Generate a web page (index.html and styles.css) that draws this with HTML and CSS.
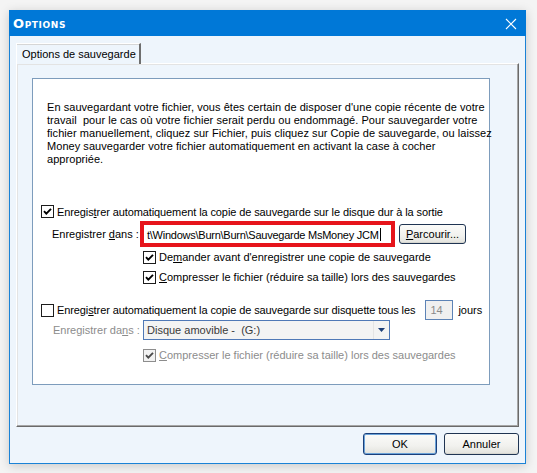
FILE: index.html
```html
<!DOCTYPE html>
<html lang="fr">
<head>
<meta charset="utf-8">
<title>Options</title>
<link rel="stylesheet" href="styles.css">
</head>
<body>
<div class="window">
  <div class="titlebar">
    <span class="title">Options</span>
    <svg class="close" width="12" height="12" viewBox="0 0 12 12"><path d="M1 1 L11 11 M11 1 L1 11" stroke="#fff" stroke-width="1.1" fill="none"/></svg>
  </div>
  <div class="client">
    <div class="tabs"><div class="tab">Options de sauvegarde</div></div>
    <div class="panel">
      <div class="box">
        <p class="intro">En sauvegardant votre fichier, vous êtes certain de disposer d'une copie récente de votre<br>travail &nbsp;pour le cas où votre fichier serait perdu ou endommagé. Pour sauvegarder votre<br>fichier manuellement, cliquez sur Fichier, puis cliquez sur Copie de sauvegarde, ou laissez<br>Money sauvegarder votre fichier automatiquement en activant la case à cocher<br>appropriée.</p>

        <div class="row r1">
          <span class="cb"><svg viewBox="0 0 13 13"><path d="M3 6.2 L5.3 8.6 L10 3.8" /></svg></span>
          <span class="lbl tight">Enregis<u>t</u>rer automatiquement la copie de sauvegarde sur le disque dur à la sortie</span>
        </div>
        <div class="row r2">
          <span class="dlabel">Enregistrer <u>d</u>ans :</span>
          <div class="redfield"><div class="field"><span class="ftext">t\Windows\Burn\Burn\Sauvegarde MsMoney JCM</span><span class="caret"></span></div></div>
          <button class="btn browse"><u>P</u>arcourir...</button>
        </div>
        <div class="row sub">
          <span class="cb"><svg viewBox="0 0 13 13"><path d="M3 6.2 L5.3 8.6 L10 3.8" /></svg></span>
          <span class="lbl">De<u>m</u>ander avant d'enregistrer une copie de sauvegarde</span>
        </div>
        <div class="row sub">
          <span class="cb"><svg viewBox="0 0 13 13"><path d="M3 6.2 L5.3 8.6 L10 3.8" /></svg></span>
          <span class="lbl"><u>C</u>ompresser le fichier (réduire sa taille) lors des sauvegardes</span>
        </div>

        <div class="row r5">
          <span class="cb"></span>
          <span class="lbl tight">Enregi<u>s</u>trer automatiquement la copie de sauvegarde sur disquette tous les</span>
          <span class="days">14</span>
          <span class="jours">jours</span>
        </div>
        <div class="row r6">
          <span class="dlabel dis">Enregistrer da<u>n</u>s :</span>
          <div class="combo"><span class="ctext">Disque amovible - &nbsp;(G:)</span><span class="arrow"><svg width="9" height="5" viewBox="0 0 9 5"><path d="M1 0 H8 L4.5 4 Z" fill="#1d3f78"/></svg></span></div>
        </div>
        <div class="row sub dis">
          <span class="cb dcb"><svg viewBox="0 0 13 13"><path d="M3 6.2 L5.3 8.6 L10 3.8" /></svg></span>
          <span class="lbl"><u>C</u>ompresser le fichier (réduire sa taille) lors des sauvegardes</span>
        </div>
      </div>
    </div>
    <div class="buttons">
      <button class="btn default">OK</button>
      <button class="btn">Annuler</button>
    </div>
  </div>
</div>
</body>
</html>
```

FILE: styles.css
```css
* { box-sizing: border-box; }
html, body { margin: 0; padding: 0; }
body {
  width: 537px;
  height: 473px;
  background: #f4f4f4;
  font-family: "Liberation Sans", Arial, sans-serif;
  font-size: 11px;
  color: #000;
  overflow: hidden;
}
.window {
  margin: 10px 0 0 9px;
  width: 517px;
  height: 454px;
  border: 1px solid #1a82d6;
  background: #eef5fc;
  box-shadow: 0 2px 10px rgba(0,0,0,0.18);
  display: flex;
  flex-direction: column;
}
.titlebar {
  background: #0078d7;
  display: flex;
  align-items: center;
  justify-content: space-between;
  margin: -1px -1px 0 -1px;
  height: 26px;
  padding: 1px 9px 0 4px;
}
.title {
  color: #fff;
  font-family: "DejaVu Sans", sans-serif;
  font-weight: bold;
  font-size: 13px;
  font-variant: small-caps;
  letter-spacing: 0.6px;
}
.close { display: block; }
.client {
  flex: 1;
  padding: 7px 6px 8px 6px;
  display: flex;
  flex-direction: column;
}
.tabs { display: flex; height: 21px; position: relative; z-index: 1; margin-bottom: -1px; }
.tab {
  width: 125px;
  height: 21px;
  background: #eef5fc;
  border-top: 1px solid #fff;
  border-left: 1px solid #fff;
  border-right: 2px solid #6e6e6e;
  padding: 4px 0 0 5px;
  white-space: nowrap;
  box-shadow: inset 0 1px 0 #d6d6d6;
}
.panel {
  height: 364px;
  border: 1px solid;
  border-color: #fff #6a6a6a #6a6a6a #fff;
  box-shadow: inset -1px -1px 0 #a6a6a6, inset 1px 1px 0 #e3e3e3;
  padding: 14px 0 0 15px;
}
.box {
  width: 458px;
  height: 307px;
  background: #fff;
  border: 1px solid #7d9cbc;
  padding: 22px 0 0 8px;
}
.intro {
  margin: 0 0 0 6px;
  line-height: 13px;
  white-space: nowrap;
  letter-spacing: 0.05px;
}
.row {
  display: flex;
  align-items: center;
  white-space: nowrap;
}
.r1 { margin-top: 36px; height: 19px; }
.r2 { height: 26px; }
.sub { height: 20px; padding-left: 102px; }
.r5 { margin-top: 13px; height: 20px; }
.r6 { height: 20px; }
.row.sub.dis { margin-top: 5px; }
.cb {
  width: 13px;
  height: 13px;
  border: 1px solid #1c1c1c;
  background: #fff;
  flex: none;
  margin-right: 2px;
  position: relative;
}
.cb svg { position: absolute; left: -1px; top: -1px; width: 13px; height: 13px; }
.cb path { fill: none; stroke: #000; stroke-width: 1.9; }
.dcb { border-color: #8d8d8d; background: #f2f2f2; }
.dcb path { stroke: #4a4a4a; }
.lbl { padding-left: 1px; }
.tight { letter-spacing: -0.1px; }
.dlabel { margin-left: 11px; width: 88px; flex: none; }
.r6 .dlabel { margin-left: 12px; width: 90px; }
.dis, .dis .lbl, .dlabel.dis { color: #8c8c8c; }
.redfield {
  width: 255px;
  height: 26px;
  border: 4px solid #e6141b;
  background: #fff;
  flex: none;
  padding: 1px 0 0 3px;
}
.field {
  height: 100%;
  display: flex;
  align-items: center;
  background: #fff;
  letter-spacing: -0.25px;
}
.ftext { flex: none; }
.caret { flex: none; width: 1px; height: 13px; background: #000; margin-left: 1px; }
.btn {
  font-family: inherit;
  font-size: 11px;
  color: #000;
  height: 22px;
  width: 75px;
  border: 1px solid #1f3452;
  border-radius: 3px;
  background: linear-gradient(#fbfbf9, #f1f1ee 60%, #e2e2dc);
  padding: 0;
  box-shadow: inset 0 -1px 0 #d6d6d0;
}
.browse { width: 67px; height: 20px; margin-left: 4px; }
.days {
  width: 28px;
  height: 20px;
  border: 1px solid #5d83b6;
  background: #f0f0f0;
  color: #8a8a8a;
  padding: 3px 0 0 4px;
  margin-left: 10px;
  flex: none;
}
.jours { margin-left: 5px; }
.combo {
  width: 247px;
  height: 20px;
  border: 1px solid #4f78b6;
  background: #f3f3f3;
  display: flex;
  align-items: center;
  justify-content: space-between;
  flex: none;
}
.ctext { padding-left: 3px; color: #3a3a3a; }
.arrow {
  width: 16px;
  height: 18px;
  border-left: 1px solid #e4e4e4;
  display: flex;
  align-items: center;
  justify-content: center;
}
.arrow svg { display: block; }
.buttons {
  display: flex;
  justify-content: flex-end;
  gap: 7px;
  margin-top: 6px;
}
.btn.default {
  width: 74px;
  border-color: #1a3f7a;
  box-shadow: inset 0 0 0 1px #6aa2d8, inset 0 -1px 0 #d6d6d0;
}
```
